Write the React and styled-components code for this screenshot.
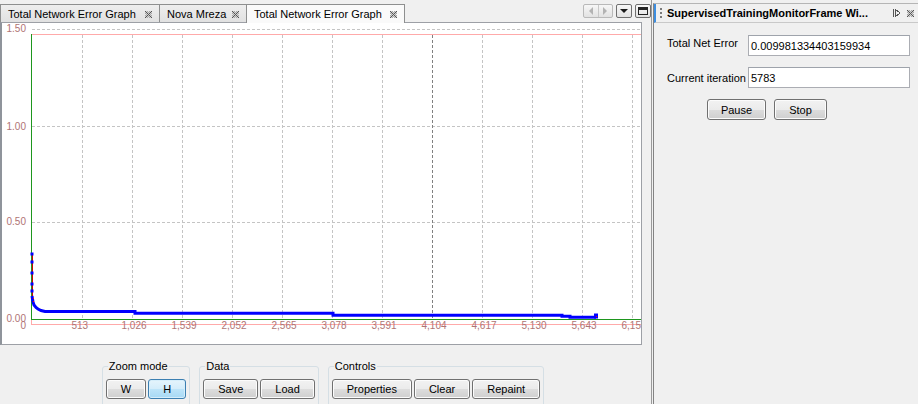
import React from 'react';
import styled, { createGlobalStyle } from 'styled-components';

const GlobalStyle = createGlobalStyle`
  html, body { margin: 0; padding: 0; background: #f0f0f0; }
  body { font-family: "Liberation Sans", Arial, sans-serif; font-size: 11px; color: #000; }
`;

const Frame = styled.div`
  display: flex;
  width: 918px;
  height: 404px;
  overflow: hidden;
  background: #f0f0f0;
`;

const LeftPane = styled.div`
  box-sizing: border-box;
  width: 652px;
  flex: none;
  display: flex;
  flex-direction: column;
  border-right: 1px solid #9a9a9a;
`;

const TabBar = styled.div`
  height: 22px;
  flex: none;
  display: flex;
  align-items: flex-end;
`;

const Tab = styled.div`
  box-sizing: border-box;
  width: ${p => p.$w}px;
  height: ${p => (p.$active ? 19 : 18)}px;
  margin-bottom: ${p => (p.$active ? -1 : 0)}px;
  margin-right: -1px;
  display: flex;
  align-items: ${p => (p.$active ? 'flex-start' : 'center')};
  justify-content: space-between;
  padding: ${p => (p.$active ? '3px' : '1px')} 7px 0 7px;
  border: 1px solid #8e8f8f;
  border-bottom: none;
  background: ${p => (p.$active ? '#fafafa' : 'linear-gradient(#eeeeee, #e1e1e1)')};
  position: relative;
  z-index: ${p => (p.$active ? 2 : 0)};
  white-space: nowrap;
  font-size: 11px;
`;

const TabClose = styled.span`
  display: flex;
  align-items: center;
  padding-top: ${p => (p.$active ? 3 : 0)}px;
`;

const TabTools = styled.div`
  margin-left: auto;
  align-self: flex-start;
  margin-top: 4px;
  display: flex;
  gap: 3px;
`;

const ToolBtn = styled.div`
  box-sizing: border-box;
  width: ${p => p.$w}px;
  height: 14px;
  display: flex;
  align-items: center;
  justify-content: center;
  border: 1px solid ${p => (p.$disabled ? '#b9b9b9' : '#6f6f6f')};
  border-radius: 2px;
  background: linear-gradient(#f7f7f7, #e2e2e2);
`;

const ToolHalf = styled.div`
  flex: 1;
  height: 100%;
  display: flex;
  align-items: center;
  justify-content: center;
  & + & { border-left: 1px solid #c8c8c8; }
`;

const ChartBox = styled.div`
  box-sizing: border-box;
  width: 642px;
  height: 323px;
  flex: none;
  background: #fff;
  border: 1px solid #9da0a6;
  border-left: 2px solid #8f949b;
  position: relative;
  z-index: 1;
`;

const ChartSvg = styled.svg`
  display: block;
  width: 639px;
  height: 321px;
`;

const ControlsBar = styled.div`
  width: 642px;
  display: flex;
  justify-content: center;
  align-items: flex-start;
  gap: 9px;
  padding-top: 14px;
  padding-left: 2px;
`;

const Group = styled.fieldset`
  margin: 0;
  padding: 0 3px 8px 3px;
  min-inline-size: 0;
  border: 1px solid #d5dfe5;
  border-radius: 3px;
`;

const GroupTitle = styled.legend`
  padding: 0 1px;
  margin-left: 2px;
  font-size: 11px;
  line-height: 14px;
`;

const ButtonRow = styled.div`
  display: flex;
  gap: ${p => p.$gap || 2}px;
  margin-top: ${p => p.$mt || 0}px;
  padding-left: ${p => p.$pl || 0}px;
`;

const Button = styled.button`
  box-sizing: border-box;
  height: ${p => p.$h || 20}px;
  min-width: ${p => p.$minw || 0}px;
  padding: 0 ${p => (p.$px != null ? p.$px : 14)}px;
  font-family: "Liberation Sans", Arial, sans-serif;
  font-size: 11px;
  color: #000;
  border: 1px solid ${p => (p.$active ? '#3c7fb1' : '#707070')};
  border-radius: 3px;
  background: ${p =>
    p.$active
      ? 'linear-gradient(#e5f4fc 0%, #d4edfb 50%, #bde4f9 51%, #a7d9f5 100%)'
      : 'linear-gradient(#f2f2f2 0%, #ebebeb 50%, #dddddd 51%, #cfcfcf 100%)'};
  box-shadow: inset 0 0 0 1px ${p => (p.$active ? '#d6eefb' : '#fcfcfc')};
  white-space: nowrap;
`;

const RightPane = styled.div`
  flex: 1;
  margin-left: 1px;
  margin-top: 3px;
  display: flex;
  flex-direction: column;
  border-left: 1px solid #838383;
  border-top: 1px solid #b5b5b5;
`;

const TitleBar = styled.div`
  box-sizing: border-box;
  height: 19px;
  display: flex;
  align-items: center;
  border-bottom: 1px solid #c9c9c9;
  border-left: 2px solid #3d8ee0;
  padding-left: 4px;
  padding-right: 4px;
`;

const Grip = styled.div`
  display: flex;
  flex-direction: column;
  gap: 2px;
  margin-right: 5px;
  & > span { width: 2px; height: 2px; background: #7a7a7a; }
`;

const TitleText = styled.div`
  font-weight: bold;
  font-size: 11px;
  white-space: nowrap;
`;

const TitleIcons = styled.div`
  margin-left: auto;
  display: flex;
  gap: 6px;
  align-items: center;
`;

const PaneBody = styled.div`
  padding: 12px 0 0 13px;
`;

const FormGrid = styled.div`
  display: grid;
  grid-template-columns: 81px 162px;
  row-gap: 11px;
  align-items: center;
`;

const FieldLabel = styled.div`
  font-size: 11px;
  white-space: nowrap;
  margin-bottom: ${p => p.$lift || 0}px;
`;

const Field = styled.div`
  box-sizing: border-box;
  height: 21px;
  display: flex;
  align-items: center;
  padding: 0 3px 0 2px;
  background: #fff;
  border: 1px solid #abadb3;
  border-top-color: #9ea3ab;
  font-size: 11px;
`;

const CloseIcon = () => {
  const cells = [];
  for (let y = 0; y < 7; y++) {
    for (let x = 0; x < 7; x++) {
      const onX = x === y || x + y === 6;
      const even = (x + y) % 2 === 0;
      let fill = null;
      if (onX) fill = '#555';
      else if (even) fill = '#a8a8a8';
      else if (Math.abs(x - y) === 1 || Math.abs(x + y - 6) === 1) fill = '#cfcfcf';
      if (fill) cells.push(<rect key={`${x}-${y}`} x={x} y={y} width="1" height="1" fill={fill} />);
    }
  }
  return (
    <svg width="7" height="7" viewBox="0 0 7 7" shapeRendering="crispEdges">
      {cells}
    </svg>
  );
};

const DockIcon = () => (
  <svg width="8" height="8" viewBox="0 0 8 8" shapeRendering="crispEdges">
    <rect x="0" y="0" width="1" height="8" fill="#555" />
    <path d="M2.5 0.5 L7 4 L2.5 7.5 Z" fill="none" stroke="#555" strokeWidth="1" />
  </svg>
);

const Tri = ({ dir, color }) => {
  const d =
    dir === 'left' ? 'M5 0 L5 8 L1 4 Z' : dir === 'right' ? 'M1 0 L1 8 L5 4 Z' : 'M0 1 L8 1 L4 5 Z';
  const w = dir === 'down' ? 8 : 6;
  const h = dir === 'down' ? 6 : 8;
  return (
    <svg width={w} height={h} viewBox={`0 0 ${w} ${h}`}>
      <path d={d} fill={color} />
    </svg>
  );
};

const MaxIcon = () => (
  <svg width="10" height="8" viewBox="0 0 10 8" shapeRendering="crispEdges">
    <rect x="0.5" y="0.5" width="9" height="7" fill="none" stroke="#222" />
    <rect x="1" y="1" width="8" height="2" fill="#222" />
  </svg>
);

const LABEL = '#b07474';
const GRID = '#c4c4c4';

const Chart = () => {
  const xTicks = [];
  for (let i = 1; i <= 12; i++) {
    const v = i * 513;
    xTicks.push({ x: 32 + 50 * i, label: v.toLocaleString('en-US') });
  }
  const yTicks = [
    { y: 29.5, label: '1.50', base: 32 },
    { y: 126.5, label: '1.00', base: 129.5 },
    { y: 222.5, label: '0.50', base: 225 },
  ];
  const squares = [254, 262, 273, 284, 291];
  const series =
    '32,296 33,302 34,305 36,307.5 38,309 41,310.5 45,311.5 135,311.5 135,313.3 333,313.3 333,315.3 562,315.3 562,316.2 570,316.2 570,317.2 596,317.2';
  return (
    <ChartSvg viewBox="2 23 639 321">
      {yTicks.map(t => (
        <line key={t.label} x1="32" x2="641" y1={t.y} y2={t.y} stroke={GRID} strokeDasharray="3 2" />
      ))}
      {xTicks.map(t => (
        <line
          key={t.x}
          x1={t.x + 0.5}
          x2={t.x + 0.5}
          y1="35"
          y2="319"
          stroke={t.x === 432 ? '#808080' : GRID}
          strokeDasharray="3 2"
        />
      ))}
      <line x1="32" x2="641" y1="34.5" y2="34.5" stroke="#ffaaaa" />
      <line x1="31" x2="641" y1="324.5" y2="324.5" stroke="#ffaaaa" />
      <line x1="31.5" x2="31.5" y1="320" y2="325" stroke="#ffaaaa" />
      <line x1="31.5" x2="31.5" y1="34" y2="320" stroke="#1e961e" />
      <line x1="31" x2="641" y1="319.5" y2="319.5" stroke="#1e961e" />

      <g fontFamily='"Liberation Sans", Arial, sans-serif' fontSize="10" fill={LABEL}>
        {yTicks.map(t => (
          <text key={t.label} x="26" y={t.base} textAnchor="end">
            {t.label}
          </text>
        ))}
        <text x="26" y="322" textAnchor="end">0.00</text>
        <text x="26" y="328.5" textAnchor="end">0</text>
        {xTicks.map(t => (
          <text key={t.label} x={t.x - 10.5} y="328.5">
            {t.label}
          </text>
        ))}
      </g>

      <line x1="32.5" x2="32.5" y1="254" y2="300" stroke="#d00000" strokeWidth="1" />
      {squares.map(y => (
        <rect key={y} x="30.5" y={y - 1.5} width="3" height="3" fill="#0000ff" />
      ))}
      <polyline points={series} fill="none" stroke="#0000ff" strokeWidth="3" strokeLinejoin="miter" />
      <rect x="594" y="313.5" width="4" height="5" fill="#0000ff" />
      <rect x="596" y="316" width="1" height="1" fill="#ff0000" />
      <rect x="33" y="298" width="1" height="1" fill="#ff0000" />
      <rect x="33" y="301" width="1" height="1" fill="#ff0000" />
    </ChartSvg>
  );
};

export default function App() {
  return (
    <>
      <GlobalStyle />
      <Frame>
        <LeftPane>
          <TabBar>
            <Tab $w={160}>
              <span>Total Network Error Graph</span>
              <TabClose><CloseIcon /></TabClose>
            </Tab>
            <Tab $w={88}>
              <span>Nova Mreza</span>
              <TabClose><CloseIcon /></TabClose>
            </Tab>
            <Tab $w={159} $active>
              <span>Total Network Error Graph</span>
              <TabClose $active><CloseIcon /></TabClose>
            </Tab>
            <TabTools>
              <ToolBtn $w={30} $disabled>
                <ToolHalf><Tri dir="left" color="#b3b3b3" /></ToolHalf>
                <ToolHalf><Tri dir="right" color="#b3b3b3" /></ToolHalf>
              </ToolBtn>
              <ToolBtn $w={16}><Tri dir="down" color="#1a1a1a" /></ToolBtn>
              <ToolBtn $w={16}><MaxIcon /></ToolBtn>
            </TabTools>
          </TabBar>
          <ChartBox>
            <Chart />
          </ChartBox>
          <ControlsBar>
            <Group>
              <GroupTitle>Zoom mode</GroupTitle>
              <ButtonRow $mt={6}>
                <Button>W</Button>
                <Button $active>H</Button>
              </ButtonRow>
            </Group>
            <Group>
              <GroupTitle>Data</GroupTitle>
              <ButtonRow $mt={6}>
                <Button>Save</Button>
                <Button>Load</Button>
              </ButtonRow>
            </Group>
            <Group>
              <GroupTitle>Controls</GroupTitle>
              <ButtonRow $mt={6}>
                <Button>Properties</Button>
                <Button>Clear</Button>
                <Button>Repaint</Button>
              </ButtonRow>
            </Group>
          </ControlsBar>
        </LeftPane>
        <RightPane>
          <TitleBar>
            <Grip><span /><span /><span /></Grip>
            <TitleText>SupervisedTrainingMonitorFrame Wi...</TitleText>
            <TitleIcons>
              <DockIcon />
              <CloseIcon />
            </TitleIcons>
          </TitleBar>
          <PaneBody>
            <FormGrid>
              <FieldLabel $lift={6}>Total Net Error</FieldLabel>
              <Field>0.009981334403159934</Field>
              <FieldLabel>Current iteration</FieldLabel>
              <Field>5783</Field>
            </FormGrid>
            <ButtonRow $gap={8} $mt={11} $pl={40}>
              <Button $h={21} $px={0} $minw={59}>Pause</Button>
              <Button $h={21} $px={0} $minw={53}>Stop</Button>
            </ButtonRow>
          </PaneBody>
        </RightPane>
      </Frame>
    </>
  );
}
